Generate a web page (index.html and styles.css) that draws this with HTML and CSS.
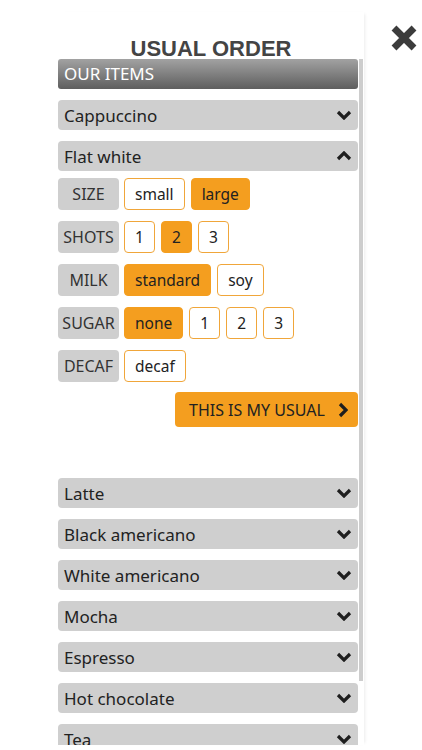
FILE: index.html
```html
<!DOCTYPE html>
<html>
<head>
<meta charset="utf-8">
<link rel="stylesheet" href="styles.css">
</head>
<body>
<div class="panel">
  <h1 class="title">USUAL ORDER</h1>
  <div class="scroll">
    <div class="header">OUR ITEMS</div>
    <ul class="items">
      <li class="item"><span>Cappuccino</span><svg class="chev" viewBox="0 0 16 10"><polyline points="2,2 8,8 14,2"/></svg></li>
      <li class="item open"><span>Flat white</span><svg class="chev" viewBox="0 0 16 10"><polyline points="2,8 8,2 14,8"/></svg></li>
    </ul>
    <div class="options">
      <div class="opt-row"><span class="label">SIZE</span><span class="opt">small</span><span class="opt on">large</span></div>
      <div class="opt-row"><span class="label">SHOTS</span><span class="opt">1</span><span class="opt on">2</span><span class="opt">3</span></div>
      <div class="opt-row"><span class="label">MILK</span><span class="opt on">standard</span><span class="opt">soy</span></div>
      <div class="opt-row"><span class="label">SUGAR</span><span class="opt on">none</span><span class="opt">1</span><span class="opt">2</span><span class="opt">3</span></div>
      <div class="opt-row"><span class="label">DECAF</span><span class="opt">decaf</span></div>
      <div class="usual-row"><button class="usual">THIS IS MY USUAL<svg class="arrow" viewBox="0 0 10 16"><polyline points="2,2 8,8 2,14"/></svg></button></div>
    </div>
    <ul class="items rest">
      <li class="item"><span>Latte</span><svg class="chev" viewBox="0 0 16 10"><polyline points="2,2 8,8 14,2"/></svg></li>
      <li class="item"><span>Black americano</span><svg class="chev" viewBox="0 0 16 10"><polyline points="2,2 8,8 14,2"/></svg></li>
      <li class="item"><span>White americano</span><svg class="chev" viewBox="0 0 16 10"><polyline points="2,2 8,8 14,2"/></svg></li>
      <li class="item"><span>Mocha</span><svg class="chev" viewBox="0 0 16 10"><polyline points="2,2 8,8 14,2"/></svg></li>
      <li class="item"><span>Espresso</span><svg class="chev" viewBox="0 0 16 10"><polyline points="2,2 8,8 14,2"/></svg></li>
      <li class="item"><span>Hot chocolate</span><svg class="chev" viewBox="0 0 16 10"><polyline points="2,2 8,8 14,2"/></svg></li>
      <li class="item"><span>Tea</span><svg class="chev" viewBox="0 0 16 10"><polyline points="2,2 8,8 14,2"/></svg></li>
    </ul>
  </div>
  <div class="thumb"></div>
</div>
<button class="close" aria-label="Close"><svg viewBox="0 0 24 24"><path d="M4 4 L20 20 M20 4 L4 20"/></svg></button>
</body>
</html>
```

FILE: styles.css
```css
html, body {
  margin: 0;
  padding: 0;
  background: #fff;
  height: 750px;
  overflow: hidden;
}
body {
  font-family: "Noto Sans", "Open Sans", sans-serif;
  color: #222;
}
.panel {
  position: relative;
  margin: 12px 0 0 58px;
  width: 306px;
  padding-top: 27px;
  box-shadow: 3px 0 3px -2px rgba(0,0,0,0.08);
}
.title {
  margin: 0;
  font-family: "Liberation Sans", Arial, sans-serif;
  font-weight: bold;
  font-size: 22px;
  line-height: 20px;
  color: #444;
  text-align: center;
}
.scroll {
  height: 686px;
  overflow: hidden;
  padding-right: 6px;
}
.thumb {
  position: absolute;
  right: 1px;
  top: 47px;
  width: 4px;
  height: 622px;
  background: #cdcdcd;
}
.header {
  height: 30px;
  line-height: 30px;
  padding-left: 6px;
  color: #fff;
  font-size: 17px;
  background: linear-gradient(#a2a2a2, #5e5e5e);
  border-radius: 3px;
}
.items {
  list-style: none;
  margin: 11px 0 0;
  padding: 0;
  display: flex;
  flex-direction: column;
  gap: 11px;
}
.rest {
  margin-top: 51px;
}
.item {
  height: 30px;
  background: #cfcfcf;
  border-radius: 4px;
  display: flex;
  align-items: center;
  justify-content: space-between;
  padding: 0 6px;
  font-size: 17px;
  color: #222;
}
.chev {
  width: 16px;
  height: 10px;
  fill: none;
  stroke: #1e1e1e;
  stroke-width: 3.2;
}
.options {
  margin-top: 7px;
  display: flex;
  flex-direction: column;
  gap: 11px;
}
.opt-row {
  display: flex;
  gap: 6px;
  height: 32px;
}
.label {
  width: 61px;
  background: #cfcfcf;
  border-radius: 4px;
  display: flex;
  align-items: center;
  justify-content: center;
  font-size: 16px;
  color: #333;
  margin-right: -1px;
}
.opt {
  min-width: 9px;
  padding: 0 10px;
  border: 1px solid #f0a63a;
  border-radius: 4px;
  background: #fff;
  display: flex;
  align-items: center;
  justify-content: center;
  font-size: 15.5px;
  color: #222;
}
.opt.on {
  background: #f49e1f;
  border-color: #f49e1f;
}
.usual-row {
  display: flex;
  justify-content: flex-end;
  margin-top: -1px;
}
.usual {
  width: 183px;
  height: 35px;
  border: none;
  border-radius: 4px;
  background: #f49e1f;
  font-family: "Noto Sans", "Open Sans", sans-serif;
  font-size: 16px;
  color: #222;
  display: flex;
  align-items: center;
  justify-content: flex-start;
  padding: 0 0 0 14px;
  gap: 13px;
}
.arrow {
  width: 10px;
  height: 16px;
  fill: none;
  stroke: #1e1e1e;
  stroke-width: 3.2;
}
.close {
  position: absolute;
  left: 389px;
  top: 23px;
  width: 30px;
  height: 30px;
  padding: 0;
  border: none;
  background: transparent;
}
.close svg {
  width: 30px;
  height: 30px;
  fill: none;
  stroke: #3c3c3c;
  stroke-width: 5.5;
}
```
